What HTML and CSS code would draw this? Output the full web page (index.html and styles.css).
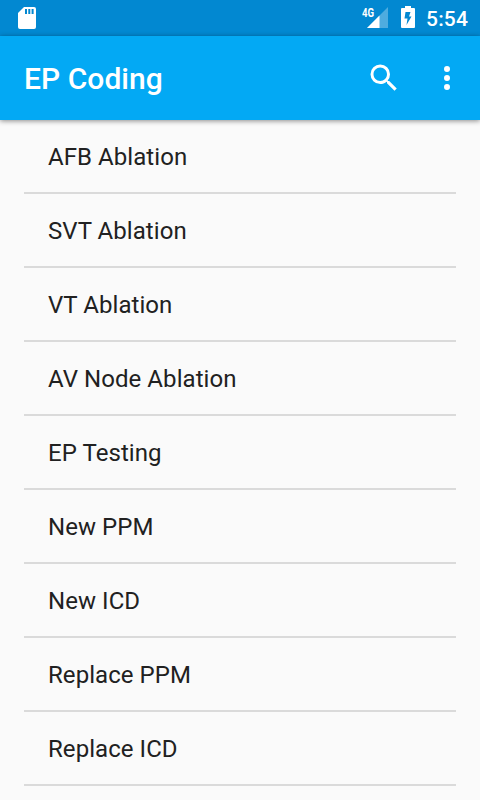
FILE: index.html
```html
<!DOCTYPE html>
<html lang="en">
<head>
<meta charset="utf-8">
<title>EP Coding</title>
<link rel="stylesheet" href="styles.css">
</head>
<body>
<header class="status">
  <svg class="sd" width="18" height="22" viewBox="0 0 18 22"><path fill="#fff" d="M6 0h10a2 2 0 0 1 2 2v18a2 2 0 0 1-2 2H2a2 2 0 0 1-2-2V6z"/><path fill="#0288d1" d="M7 2h2v5H7zM10.300 2h2v5h-2zM13.600 2h2v5h-2z"/></svg>
  <div class="network">
    <span class="generation">4G</span>
    <svg class="signal" width="21" height="21" viewBox="0 0 21 21"><path fill="#fff" fill-opacity=".3" d="M21 0v21H0z"/><path fill="#fff" d="M12.500 8.500V21H0z"/></svg>
  </div>
  <svg class="battery" width="14" height="22" viewBox="0 0 14 22"><path fill="#fff" d="M4 0h6v2h3a1 1 0 0 1 1 1v18a1 1 0 0 1-1 1H1a1 1 0 0 1-1-1V3a1 1 0 0 1 1-1h3z"/><path fill="#0288d1" d="M4.500 6h5L8 10.500h2.500L5.500 19l1-6.500h-3z"/></svg>
  <time class="clock">5:54</time>
</header>
<div class="toolbar">
  <h1 class="title">EP Coding</h1>
  <svg class="search" width="36" height="36" viewBox="0 0 24 24"><path fill="#fff" d="M15.5 14h-.79l-.28-.27A6.471 6.471 0 0 0 16 9.5 6.5 6.5 0 1 0 9.500 16c1.610 0 3.090-.59 4.230-1.570l.27.28v.79l5 4.990L20.490 19l-4.990-5zm-6 0C7.010 14 5 11.990 5 9.500S7.010 5 9.500 5 14 7.010 14 9.500 11.990 14 9.500 14z"/></svg>
  <svg class="more" width="36" height="36" viewBox="0 0 24 24"><path fill="#fff" d="M12 8a2 2 0 1 0 0-4 2 2 0 0 0 0 4zm0 2a2 2 0 1 0 0 4 2 2 0 0 0 0-4zm0 6a2 2 0 1 0 0 4 2 2 0 0 0 0-4z"/></svg>
</div>
<ul class="list">
  <li>AFB Ablation</li>
  <li>SVT Ablation</li>
  <li>VT Ablation</li>
  <li>AV Node Ablation</li>
  <li>EP Testing</li>
  <li>New PPM</li>
  <li>New ICD</li>
  <li>Replace PPM</li>
  <li>Replace ICD</li>
</ul>
</body>
</html>
```
FILE: styles.css
```css
* { box-sizing: border-box; }
body {
  margin: 0;
  height: 800px;
  overflow: hidden;
  background: #fafafa;
  color: #212121;
  font-family: Roboto, sans-serif;
}
.status {
  display: flex;
  height: 36px;
  padding: 7px 12px 0 18px;
  background: #0288d1;
  color: #fff;
}
.network { position: relative; margin-left: auto; margin-right: 13px; height: 21px; }
.signal, .sd, .battery { display: block; }
.generation {
  position: absolute;
  left: -5px;
  top: -1px;
  font-size: 12.5px;
  line-height: 13px;
  font-weight: 700;
  transform: scaleX(.77);
  transform-origin: left;
}
.battery { margin: -1px 11px 0 0; }
.clock { width: 42px; font-size: 21px; line-height: 24px; font-weight: 500; letter-spacing: .2px; }
.toolbar {
  position: relative;
  display: flex;
  align-items: center;
  height: 84px;
  padding: 0 15px 0 24px;
  background: #03a9f4;
  color: #fff;
  box-shadow: 0 1px 5px rgba(0, 0, 0, .45);
}
.title { margin: 2px auto 0 0; font-size: 30px; font-weight: 500; line-height: 36px; letter-spacing: .05px; }
.search { margin-right: 27px; }
.list { list-style: none; margin: 0; padding: 0 24px; }
.list li {
  height: 74px;
  padding: 0 24px;
  border-bottom: 2px solid #dadada;
  font-size: 24px;
  line-height: 74px;
  letter-spacing: .06px;
}
```
